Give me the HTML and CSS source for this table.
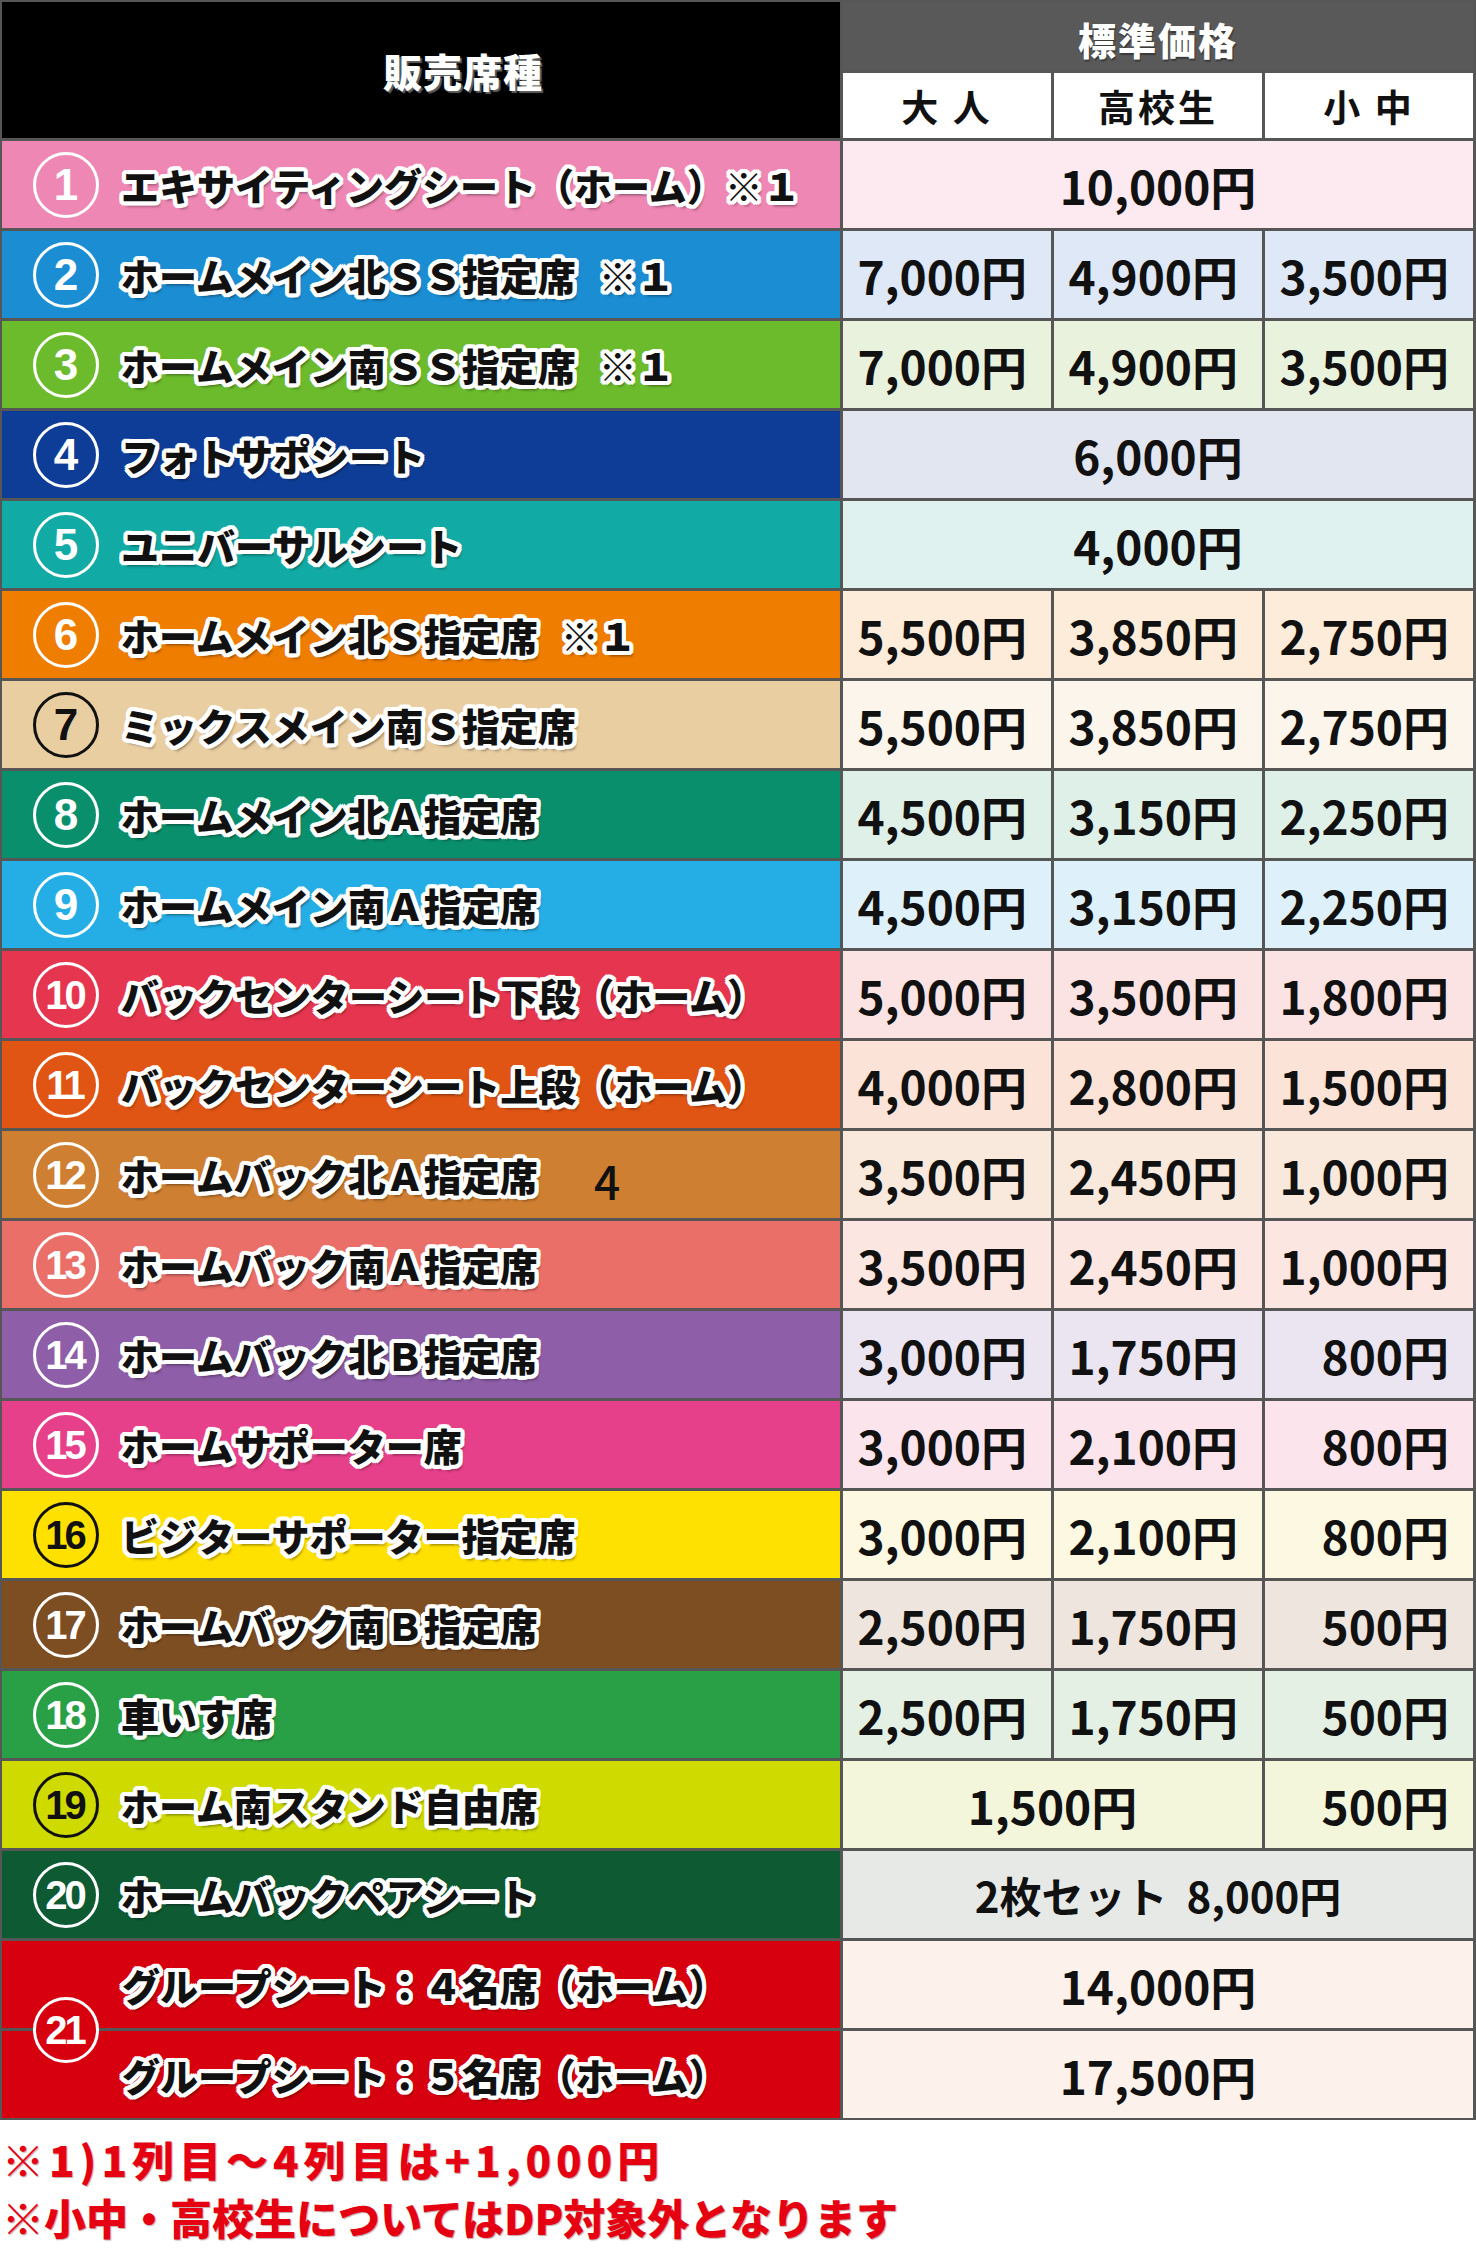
FILE: index.html
```html
<!DOCTYPE html>
<html lang="ja">
<head>
<meta charset="utf-8">
<title>席種・価格表</title>
<link rel="stylesheet" href="styles.css">
</head>
<body>
<div class="table">
  <div class="head-seat">販売席種</div>
  <div class="head-price">標準価格</div>
  <div class="head-sub">大 人</div>
  <div class="head-sub">高校生</div>
  <div class="head-sub">小 中</div>

  <div class="seat c1"><span class="num">1</span><span class="name">エキサイティングシート（ホーム）※1</span></div>
  <div class="price p1 span3">10,000円</div>

  <div class="seat c2"><span class="num">2</span><span class="name">ホームメイン北SS指定席 ※1</span></div>
  <div class="price p2">7,000円</div><div class="price p2">4,900円</div><div class="price p2">3,500円</div>

  <div class="seat c3"><span class="num">3</span><span class="name">ホームメイン南SS指定席 ※1</span></div>
  <div class="price p3">7,000円</div><div class="price p3">4,900円</div><div class="price p3">3,500円</div>

  <div class="seat c4"><span class="num">4</span><span class="name">フォトサポシート</span></div>
  <div class="price p4 span3">6,000円</div>

  <div class="seat c5"><span class="num">5</span><span class="name">ユニバーサルシート</span></div>
  <div class="price p5 span3">4,000円</div>

  <div class="seat c6"><span class="num">6</span><span class="name">ホームメイン北S指定席 ※1</span></div>
  <div class="price p6">5,500円</div><div class="price p6">3,850円</div><div class="price p6">2,750円</div>

  <div class="seat c7 dark"><span class="num">7</span><span class="name">ミックスメイン南S指定席</span></div>
  <div class="price p7">5,500円</div><div class="price p7">3,850円</div><div class="price p7">2,750円</div>

  <div class="seat c8"><span class="num">8</span><span class="name">ホームメイン北A指定席</span></div>
  <div class="price p8">4,500円</div><div class="price p8">3,150円</div><div class="price p8">2,250円</div>

  <div class="seat c9"><span class="num">9</span><span class="name">ホームメイン南A指定席</span></div>
  <div class="price p9">4,500円</div><div class="price p9">3,150円</div><div class="price p9">2,250円</div>

  <div class="seat c10"><span class="num two">10</span><span class="name">バックセンターシート下段(ホーム)</span></div>
  <div class="price p10">5,000円</div><div class="price p10">3,500円</div><div class="price p10">1,800円</div>

  <div class="seat c11"><span class="num two">11</span><span class="name">バックセンターシート上段(ホーム)</span></div>
  <div class="price p11">4,000円</div><div class="price p11">2,800円</div><div class="price p11">1,500円</div>

  <div class="seat c12"><span class="num two">12</span><span class="name">ホームバック北A指定席</span><span class="stray">4</span></div>
  <div class="price p12">3,500円</div><div class="price p12">2,450円</div><div class="price p12">1,000円</div>

  <div class="seat c13"><span class="num two">13</span><span class="name">ホームバック南A指定席</span></div>
  <div class="price p13">3,500円</div><div class="price p13">2,450円</div><div class="price p13">1,000円</div>

  <div class="seat c14"><span class="num two">14</span><span class="name">ホームバック北B指定席</span></div>
  <div class="price p14">3,000円</div><div class="price p14">1,750円</div><div class="price p14">800円</div>

  <div class="seat c15"><span class="num two">15</span><span class="name">ホームサポーター席</span></div>
  <div class="price p15">3,000円</div><div class="price p15">2,100円</div><div class="price p15">800円</div>

  <div class="seat c16 dark"><span class="num two">16</span><span class="name">ビジターサポーター指定席</span></div>
  <div class="price p16">3,000円</div><div class="price p16">2,100円</div><div class="price p16">800円</div>

  <div class="seat c17"><span class="num two">17</span><span class="name">ホームバック南B指定席</span></div>
  <div class="price p17">2,500円</div><div class="price p17">1,750円</div><div class="price p17">500円</div>

  <div class="seat c18"><span class="num two">18</span><span class="name">車いす席</span></div>
  <div class="price p18">2,500円</div><div class="price p18">1,750円</div><div class="price p18">500円</div>

  <div class="seat c19 dark"><span class="num two">19</span><span class="name">ホーム南スタンド自由席</span></div>
  <div class="price p19 span2">1,500円</div><div class="price p19">500円</div>

  <div class="seat c20"><span class="num two">20</span><span class="name">ホームバックペアシート</span></div>
  <div class="price p20 span3 pair">2枚セット&nbsp;&nbsp;8,000円</div>

  <div class="seat-group">
    <div class="sub c21"><span class="name">グループシート:4名席(ホーム)</span></div>
    <div class="sub c21"><span class="name">グループシート:5名席(ホーム)</span></div>
    <span class="num two group-num">21</span>
  </div>
  <div class="price p21 span3">14,000円</div>
  <div class="price p21 span3">17,500円</div>
</div>

<div class="notes">
  <p class="note note-wide">※1)1列目～4列目は+1,000円</p>
  <p class="note">※小中・高校生についてはDP対象外となります</p>
</div>
</body>
</html>
```

FILE: styles.css
```css
html, body {
  margin: 0;
  padding: 0;
  background: #ffffff;
}

body {
  width: 1476px;
  font-family: "Noto Sans CJK JP", "Noto Sans", sans-serif;
}

.table {
  display: grid;
  grid-template-columns: 838px 208px 208px 208px;
  grid-template-rows: 68px 65px repeat(22, 87px);
  gap: 3px;
  padding: 2px 3px 2px 2px;
  background: #565656;
  width: fit-content;
}

.head-seat {
  grid-row: 1 / span 2;
  background: #000;
  color: #fff;
  font-size: 39px;
  font-weight: 900;
  letter-spacing: 1px;
  display: flex;
  align-items: center;
  justify-content: center;
  padding-left: 84px;
  text-shadow: 2px 2px 1px rgba(160, 160, 160, 0.6);
}

.head-price {
  grid-column: 2 / span 3;
  background: #595959;
  color: #fff;
  font-size: 38px;
  font-weight: 900;
  letter-spacing: 2px;
  display: flex;
  align-items: center;
  justify-content: center;
  padding-top: 4px;
  text-shadow: 1px 2px 1px rgba(0, 0, 0, 0.35);
}

.head-sub {
  background: #fff;
  color: #111;
  font-size: 37px;
  font-weight: 700;
  letter-spacing: 3px;
  display: flex;
  align-items: center;
  justify-content: center;
}

.seat {
  display: flex;
  align-items: center;
}

.num {
  flex: 0 0 auto;
  box-sizing: border-box;
  width: 66px;
  height: 66px;
  margin-left: 31px;
  margin-right: 22px;
  border: 3px solid #fff;
  border-radius: 50%;
  color: #fff;
  font-family: "Liberation Sans", "Noto Sans", sans-serif;
  font-size: 44px;
  font-weight: 700;
  line-height: 1;
  display: flex;
  align-items: center;
  justify-content: center;
}

.num.two {
  font-size: 40px;
  letter-spacing: -3px;
  padding-right: 3px;
}

.dark .num {
  border-color: #111;
  color: #111;
}

.name {
  color: #111;
  font-size: 38px;
  font-weight: 900;
  white-space: nowrap;
  font-feature-settings: "fwid";
  word-spacing: -0.4em;
  text-shadow:
    4px 0 0 #fff, -4px 0 0 #fff, 0 4px 0 #fff, 0 -4px 0 #fff,
    3px 3px 0 #fff, -3px 3px 0 #fff, 3px -3px 0 #fff, -3px -3px 0 #fff,
    4px 2px 0 #fff, 4px -2px 0 #fff, -4px 2px 0 #fff, -4px -2px 0 #fff,
    2px 4px 0 #fff, -2px 4px 0 #fff, 2px -4px 0 #fff, -2px -4px 0 #fff,
    3px 5px 3px rgba(0, 0, 0, 0.45);
}

.stray {
  margin-left: 56px;
  padding-top: 10px;
  color: #111;
  font-size: 46px;
  font-weight: 500;
}

.seat-group {
  grid-row: span 2;
  position: relative;
  display: grid;
  grid-template-rows: 87px 87px;
  gap: 3px;
}

.sub {
  display: flex;
  align-items: center;
  padding-left: 120px;
}

.group-num {
  position: absolute;
  left: 0;
  top: 50%;
  transform: translateY(-50%);
  background: #d7000f;
}

.price {
  display: flex;
  align-items: center;
  justify-content: flex-end;
  padding-right: 24px;
  color: #111;
  font-size: 46px;
  font-weight: 700;
  white-space: nowrap;
}

.span3 {
  grid-column: span 3;
  justify-content: center;
  padding-right: 0;
}

.span2 {
  grid-column: span 2;
  justify-content: center;
  padding-right: 0;
}

.pair {
  font-size: 42px;
}

.notes {
  padding: 10px 0 0 2px;
}

.note {
  margin: 0;
  color: #e50012;
  font-size: 42px;
  font-weight: 900;
  line-height: 58px;
  white-space: nowrap;
  text-shadow: 1px 1px 1px rgba(80, 0, 0, 0.35);
}

.note-wide {
  letter-spacing: 5px;
}

/* seat colours */
.c1 { background: #ee87b4; }
.c2 { background: #1b8dd3; }
.c3 { background: #6cbb2d; }
.c4 { background: #0d3d96; }
.c5 { background: #12aaa4; }
.c6 { background: #ef7d00; }
.c7 { background: #e9cea2; }
.c8 { background: #0a8f6d; }
.c9 { background: #25ade5; }
.c10 { background: #e6364f; }
.c11 { background: #e15514; }
.c12 { background: #cf7f31; }
.c13 { background: #ea6f69; }
.c14 { background: #8e5ea8; }
.c15 { background: #e7408b; }
.c16 { background: #ffe100; }
.c17 { background: #7e4e23; }
.c18 { background: #2aa046; }
.c19 { background: #cfdb00; }
.c20 { background: #0e5a33; }
.c21 { background: #d7000f; }

/* price colours */
.p1 { background: #fdeaf0; }
.p2 { background: #dee8f6; }
.p3 { background: #e8f2dc; }
.p4 { background: #e2e6f1; }
.p5 { background: #e0f2f0; }
.p6 { background: #fdecd9; }
.p7 { background: #fbf5eb; }
.p8 { background: #def0e8; }
.p9 { background: #def1fa; }
.p10 { background: #fce3e3; }
.p11 { background: #fbe4d7; }
.p12 { background: #f8e9dc; }
.p13 { background: #fce6e2; }
.p14 { background: #ebe4f1; }
.p15 { background: #fce4ed; }
.p16 { background: #fdf8e2; }
.p17 { background: #ede5de; }
.p18 { background: #e3f0e3; }
.p19 { background: #f4f6dc; }
.p20 { background: #e6e9e6; }
.p21 { background: #fcf1eb; }
```
